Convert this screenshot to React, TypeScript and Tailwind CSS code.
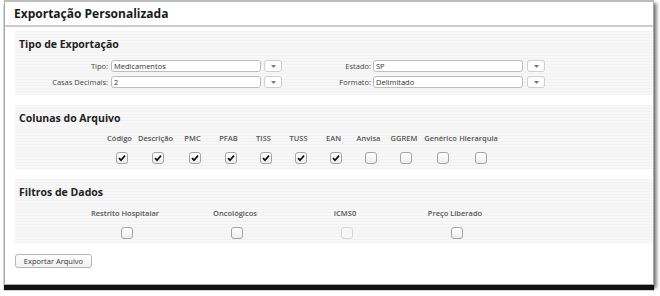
import React from "react";

const font = { fontFamily: '"Open Sans", "DejaVu Sans", sans-serif' };

const colunas = [
  { label: "Código", w: "w-[35px]", on: true },
  { label: "Descrição", w: "w-[37px]", on: true },
  { label: "PMC", w: "w-[37px]", on: true },
  { label: "PFAB", w: "w-[35px]", on: true },
  { label: "TISS", w: "w-[35px]", on: true },
  { label: "TUSS", w: "w-[35px]", on: true },
  { label: "EAN", w: "w-[35px]", on: true },
  { label: "Anvisa", w: "w-[35px]", on: false },
  { label: "GGREM", w: "w-[36px]", on: false },
  { label: "Genérico", w: "w-[37px]", on: false },
  { label: "Hierarquia", w: "w-[39px]", on: false },
];

const filtros = [
  { label: "Restrito Hospitalar", disabled: false },
  { label: "Oncológicos", disabled: false },
  { label: "ICMS0", disabled: true },
  { label: "Preço Liberado", disabled: false },
];

function Check({ on, disabled }: { on?: boolean; disabled?: boolean }) {
  return (
    <span
      className={`flex h-[12px] w-[12px] items-center justify-center rounded-[3px] border ${
        disabled
          ? "border-[#d6d6d6] bg-[#f6f6f6]"
          : "border-[#a4a4a4] bg-gradient-to-b from-white to-[#ededed]"
      }`}
    >
      {on && (
        <svg width="8" height="8" viewBox="0 0 8 8">
          <path d="M1 4.2 L3 6.2 L7 1.6" fill="none" stroke="#111" strokeWidth="1.7" />
        </svg>
      )}
    </span>
  );
}

function Combo({ label, value, gapIn, gapBtn }: { label: string; value: string; gapIn: string; gapBtn: string }) {
  return (
    <div className="flex items-center">
      <span className="w-[89px] text-right text-[7.5px] leading-[12px] text-[#444]">{label}</span>
      <div className={`${gapIn} h-[12px] w-[150px] rounded-[3px] border border-[#bdbdbd] bg-white pl-[2px] text-[7.5px] leading-[10px] text-[#333]`}>
        {value}
      </div>
      <div className={`${gapBtn} flex h-[12px] w-[18px] items-center justify-center rounded-[3px] border border-[#cfcfcf] bg-white`}>
        <svg width="5" height="3" viewBox="0 0 5 3">
          <polygon points="0,0 5,0 2.5,3" fill="#777" />
        </svg>
      </div>
    </div>
  );
}

function Panel({ title, children }: { title: string; children: React.ReactNode }) {
  return (
    <section className="ml-[10px] h-[64px] bg-[repeating-linear-gradient(0deg,#f2f2f2_0px,#f2f2f2_1px,#f7f7f7_1px,#f7f7f7_3px)] pl-[4px]">
      <h2 className="pt-[6px] text-[10.5px] font-bold leading-[14px] text-[#222]">{title}</h2>
      {children}
    </section>
  );
}

export default function App() {
  return (
    <div className="h-[296px] w-[660px] bg-white pl-[4px]" style={font}>
      <div className="h-[285px] w-[650px] border border-t-2 border-[#a9a9a9] border-t-[#bdbdbd] bg-white shadow-[0_5px_1px_#111,3px_3px_3px_rgba(0,0,0,0.45)]">
        <div className="flex h-[25px] items-end border-b-2 border-[#cccccc] pb-[2px] pl-[9px]">
          <h1 className="text-[12px] font-bold leading-[18px] text-[#1a1a1a]">Exportação Personalizada</h1>
        </div>
        <div className="flex flex-col gap-[10px] pt-[4px]">
          <Panel title="Tipo de Exportação">
            <div className="mt-[9px] flex flex-col gap-[4px]">
              <div className="flex">
                <Combo label="Tipo:" value="Medicamentos" gapIn="ml-[3px]" gapBtn="ml-[3px]" />
                <Combo label="Estado:" value="SP" gapIn="ml-[2px]" gapBtn="ml-[4px]" />
              </div>
              <div className="flex">
                <Combo label="Casas Decimais:" value="2" gapIn="ml-[3px]" gapBtn="ml-[3px]" />
                <Combo label="Formato:" value="Delimitado" gapIn="ml-[2px]" gapBtn="ml-[4px]" />
              </div>
            </div>
          </Panel>
          <Panel title="Colunas do Arquivo">
            <div className="mt-[8px] flex pl-[83px]">
              {colunas.map((c) => (
                <div key={c.label} className={`${c.w} flex flex-col items-center`}>
                  <span className="whitespace-nowrap text-[7.5px] font-semibold leading-[10px] text-[#555]">{c.label}</span>
                  <span className="mt-[9px] pl-[4px]">
                    <Check on={c.on} />
                  </span>
                </div>
              ))}
            </div>
          </Panel>
          <Panel title="Filtros de Dados">
            <div className="mt-[9px] flex pl-[51px]">
              {filtros.map((f) => (
                <div key={f.label} className="flex w-[110px] flex-col items-center">
                  <span className="whitespace-nowrap text-[7.5px] font-semibold leading-[10px] text-[#555]">{f.label}</span>
                  <span className="mt-[9px] pl-[4px]">
                    <Check disabled={f.disabled} />
                  </span>
                </div>
              ))}
            </div>
          </Panel>
        </div>
        <button className="ml-[10px] mt-[11px] h-[14px] w-[77px] rounded-[3px] border border-[#b4b4b4] bg-gradient-to-b from-white to-[#f1f1f1] text-[7.5px] leading-[12px] text-[#333]">
          Exportar Arquivo
        </button>
      </div>
    </div>
  );
}
